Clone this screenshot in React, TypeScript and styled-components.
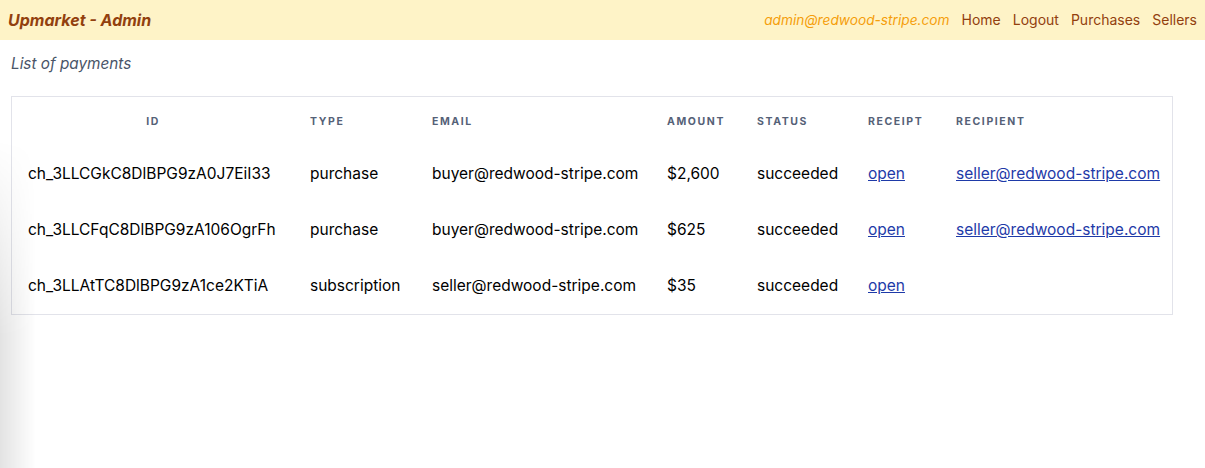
import React from "react"
import styled, { createGlobalStyle } from "styled-components"

type Payment = {
  id: string
  type: string
  email: string
  amount: string
  status: string
  recipient?: string
}

const payments: Payment[] = [
  {
    id: "ch_3LLCGkC8DlBPG9zA0J7EiI33",
    type: "purchase",
    email: "buyer@redwood-stripe.com",
    amount: "$2,600",
    status: "succeeded",
    recipient: "seller@redwood-stripe.com",
  },
  {
    id: "ch_3LLCFqC8DlBPG9zA106OgrFh",
    type: "purchase",
    email: "buyer@redwood-stripe.com",
    amount: "$625",
    status: "succeeded",
    recipient: "seller@redwood-stripe.com",
  },
  {
    id: "ch_3LLAtTC8DlBPG9zA1ce2KTiA",
    type: "subscription",
    email: "seller@redwood-stripe.com",
    amount: "$35",
    status: "succeeded",
  },
]

const columns = [
  { label: "ID", width: 282, center: true },
  { label: "Type", width: 122 },
  { label: "Email", width: 235 },
  { label: "Amount", width: 90 },
  { label: "Status", width: 111 },
  { label: "Receipt", width: 88 },
  { label: "Recipient", width: 232 },
]

const App: React.FC = () => {
  return (
    <>
      <GlobalStyle />
      <Header>
        <Brand>Upmarket - Admin</Brand>
        <Nav>
          <UserEmail>admin@redwood-stripe.com</UserEmail>
          <NavLink href="#">Home</NavLink>
          <NavLink href="#">Logout</NavLink>
          <NavLink href="#">Purchases</NavLink>
          <NavLink href="#">Sellers</NavLink>
        </Nav>
      </Header>
      <Main>
        <PageTitle>List of payments</PageTitle>
        <TableWrap>
          <Table>
            <thead>
              <tr>
                {columns.map(col => (
                  <Th key={col.label} $width={col.width} $center={col.center}>
                    {col.label}
                  </Th>
                ))}
              </tr>
            </thead>
            <tbody>
              {payments.map(p => (
                <tr key={p.id}>
                  <Td>{p.id}</Td>
                  <Td>{p.type}</Td>
                  <Td>{p.email}</Td>
                  <Td>{p.amount}</Td>
                  <Td>{p.status}</Td>
                  <Td>
                    <Link href="#">open</Link>
                  </Td>
                  <Td>{p.recipient && <Link href="#">{p.recipient}</Link>}</Td>
                </tr>
              ))}
            </tbody>
          </Table>
        </TableWrap>
      </Main>
      <EdgeShadow />
    </>
  )
}

export default App

const GlobalStyle = createGlobalStyle`
  html, body {
    margin: 0;
    padding: 0;
    background: #ffffff;
  }
  body {
    font-family: Inter, "Noto Sans", sans-serif;
    color: #000000;
  }
`

const Header = styled.header`
  display: flex;
  align-items: center;
  justify-content: space-between;
  height: 40px;
  padding: 0 8px;
  background: #fef3c7;
`

const Brand = styled.h1`
  margin: 0;
  font-size: 16px;
  font-weight: 700;
  font-style: italic;
  color: #92400e;
  letter-spacing: 0;
  line-height: 38px;
`

const Nav = styled.nav`
  display: flex;
  align-items: center;
  gap: 12px;
  font-size: 14px;
  line-height: 38px;
`

const UserEmail = styled.span`
  font-style: italic;
  color: #f59e0b;
  font-size: 13.7px;
`

const NavLink = styled.a`
  color: #92400e;
  text-decoration: none;
`

const Main = styled.main`
  padding: 0 32px 0 11px;
`

const PageTitle = styled.h2`
  margin: 0;
  padding: 14px 0 0;
  height: 42px;
  box-sizing: border-box;
  font-size: 15.3px;
  font-weight: 400;
  font-style: italic;
  color: #4a5568;
`

const TableWrap = styled.div`
  display: inline-block;
  border: 1px solid #e2e3ea;
  margin-top: 14px;
`

const Table = styled.table`
  width: 1160px;
  border-collapse: collapse;
  table-layout: fixed;
  font-size: 15.5px;
`

const Th = styled.th<{ $width: number; $center?: boolean }>`
  width: ${p => p.$width}px;
  box-sizing: border-box;
  padding: 16px;
  line-height: 17px;
  font-size: 10.5px;
  font-weight: 700;
  letter-spacing: 1.6px;
  text-transform: uppercase;
  text-align: ${p => (p.$center ? "center" : "left")};
  color: #556177;
`

const Td = styled.td`
  padding: 16px;
  line-height: 24px;
  white-space: nowrap;
`

const Link = styled.a`
  color: #1e3aa8;
  text-decoration: underline;
`

const EdgeShadow = styled.div`
  position: fixed;
  left: 0;
  top: 140px;
  bottom: 0;
  width: 36px;
  pointer-events: none;
  background: linear-gradient(to right, rgba(0, 0, 0, 0.11), rgba(0, 0, 0, 0));
  -webkit-mask-image: linear-gradient(to bottom, transparent, black 60%);
  mask-image: linear-gradient(to bottom, transparent, black 60%);
`
